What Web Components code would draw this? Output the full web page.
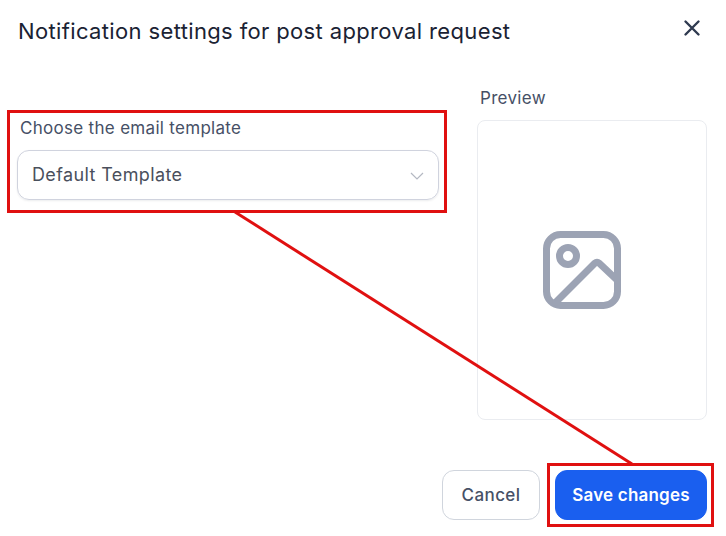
<!DOCTYPE html>
<html>
<head>
<meta charset="utf-8">
<style>
  html, body { margin: 0; background: #fff; }
</style>
</head>
<body>
<settings-dialog>
  <span slot="title">Notification settings for post approval request</span>
  <template-select slot="left" label="Choose the email template" value="Default Template"></template-select>
  <template-preview slot="right"></template-preview>
  <action-button slot="actions">Cancel</action-button>
  <action-button slot="actions" primary>Save changes</action-button>
</settings-dialog>
<script>
class SettingsDialog extends HTMLElement {
    constructor() {
        super();
        const shadow = this.attachShadow({ mode: 'open' });
        shadow.innerHTML = `
            <style>
                :host {
                    display: block;
                    position: relative;
                    width: 726px;
                    height: 536px;
                    box-sizing: border-box;
                    padding: 16px 19px 0 17px;
                    background: #fff;
                    font-family: Inter, "Liberation Sans", sans-serif;
                    overflow: hidden;
                }
                header {
                    display: flex;
                    justify-content: space-between;
                    align-items: flex-start;
                    height: 64px;
                    padding-left: 1px;
                }
                h2 {
                    margin: 0;
                    font-size: 22px;
                    letter-spacing: 0.36px;
                    line-height: 30px;
                    font-weight: 400;
                    color: #1a2233;
                }
                .close {
                    width: 24px;
                    height: 24px;
                    margin: 0 3px 0 0;
                    color: #2f3a50;
                }
                .body {
                    display: flex;
                    justify-content: space-between;
                    height: 340px;
                }
                .left { width: 422px; padding-top: 36px; }
                .right { width: 230px; }
                footer {
                    display: flex;
                    justify-content: flex-end;
                    gap: 15px;
                    margin-top: 50px;
                }
                .marks {
                    position: absolute;
                    left: 0;
                    top: 0;
                    pointer-events: none;
                }
            </style>
            <header>
                <h2><slot name="title"></slot></h2>
                <svg class="close" viewBox="0 0 24 24" fill="none" stroke="currentColor" stroke-width="2.4" stroke-linecap="round">
                    <path d="M6 6.5l13 13M19 6.5l-13 13" transform="translate(-.5 -1)"/>
                </svg>
            </header>
            <div class="body">
                <div class="left"><slot name="left"></slot></div>
                <div class="right"><slot name="right"></slot></div>
            </div>
            <footer><slot name="actions"></slot></footer>
            <svg class="marks" width="726" height="536" fill="none" stroke="#e01010" stroke-width="3">
                <rect x="8.5" y="111.5" width="437" height="100"/>
                <rect x="548.5" y="464.5" width="164" height="61"/>
                <path d="M235 212L632 464" stroke-width="3"/>
            </svg>
        `;
    }
}

class TemplateSelect extends HTMLElement {
    constructor() {
        super();
        const shadow = this.attachShadow({ mode: 'open' });
        shadow.innerHTML = `
            <style>
                :host { display: block; }
                label {
                    display: block;
                    padding-left: 3px;
                    font-size: 17px;
                    letter-spacing: 0.3px;
                    line-height: 24px;
                    font-weight: 400;
                    color: #465066;
                    margin-bottom: 10px;
                }
                .box {
                    display: flex;
                    align-items: center;
                    justify-content: space-between;
                    box-sizing: border-box;
                    height: 50px;
                    padding: 0 14px 2px 14px;
                    border: 1px solid #d0d3de;
                    border-radius: 12px;
                    box-shadow: 0 1px 2px rgba(16, 24, 40, 0.08);
                    font-size: 18px;
                    letter-spacing: 0.375px;
                    color: #4a4f5c;
                }
                svg { margin-top: 4px; }
            </style>
            <label>${this.getAttribute('label')}</label>
            <div class="box">
                <span>${this.getAttribute('value')}</span>
                <svg width="14" height="8" viewBox="0 0 14 8" fill="none" stroke="#b4b8c2" stroke-width="1.2">
                    <path d="M1 1l6 6 6-6"/>
                </svg>
            </div>
        `;
    }
}

class TemplatePreview extends HTMLElement {
    constructor() {
        super();
        const shadow = this.attachShadow({ mode: 'open' });
        shadow.innerHTML = `
            <style>
                :host { display: block; }
                .title {
                    padding-left: 3px;
                    font-size: 17px;
                    letter-spacing: 0.3px;
                    line-height: 24px;
                    color: #465066;
                    margin: 6px 0 10px;
                }
                .frame {
                    display: flex;
                    align-items: center;
                    justify-content: center;
                    box-sizing: border-box;
                    height: 300px;
                    padding-right: 20px;
                    border: 1px solid #eaecf0;
                    border-radius: 8px;
                }
            </style>
            <div class="title">Preview</div>
            <div class="frame">
                <svg width="80" height="80" viewBox="0 0 80 80" fill="none" stroke="#9ca3b4" stroke-width="7" stroke-linejoin="round" stroke-linecap="round">
                    <rect x="4.5" y="4.5" width="71" height="71" rx="14"/>
                    <circle cx="26" cy="26" r="8.5"/>
                    <path d="M14 72L53 33a3 3 0 0 1 4 0L75 50"/>
                </svg>
            </div>
        `;
    }
}

class ActionButton extends HTMLElement {
    constructor() {
        super();
        const shadow = this.attachShadow({ mode: 'open' });
        shadow.innerHTML = `
            <style>
                :host { display: block; }
                button {
                    display: block;
                    box-sizing: border-box;
                    height: 50px;
                    width: 98px;
                    border: 1px solid #d0d5dd;
                    border-radius: 12px;
                    background: #fff;
                    color: #465066;
                    font: 500 17px Inter, "Liberation Sans", sans-serif;
                    letter-spacing: 0.4px;
                    padding: 0;
                }
                :host([primary]) button {
                    width: 152px;
                    background: #1a5fef;
                    border-color: #1a5fef;
                    color: #fff;
                    font-weight: 600;
                    letter-spacing: 0.2px;
                }
            </style>
            <button><slot></slot></button>
        `;
    }
}

customElements.define('settings-dialog', SettingsDialog);
customElements.define('template-select', TemplateSelect);
customElements.define('template-preview', TemplatePreview);
customElements.define('action-button', ActionButton);
</script>
</body>
</html>
